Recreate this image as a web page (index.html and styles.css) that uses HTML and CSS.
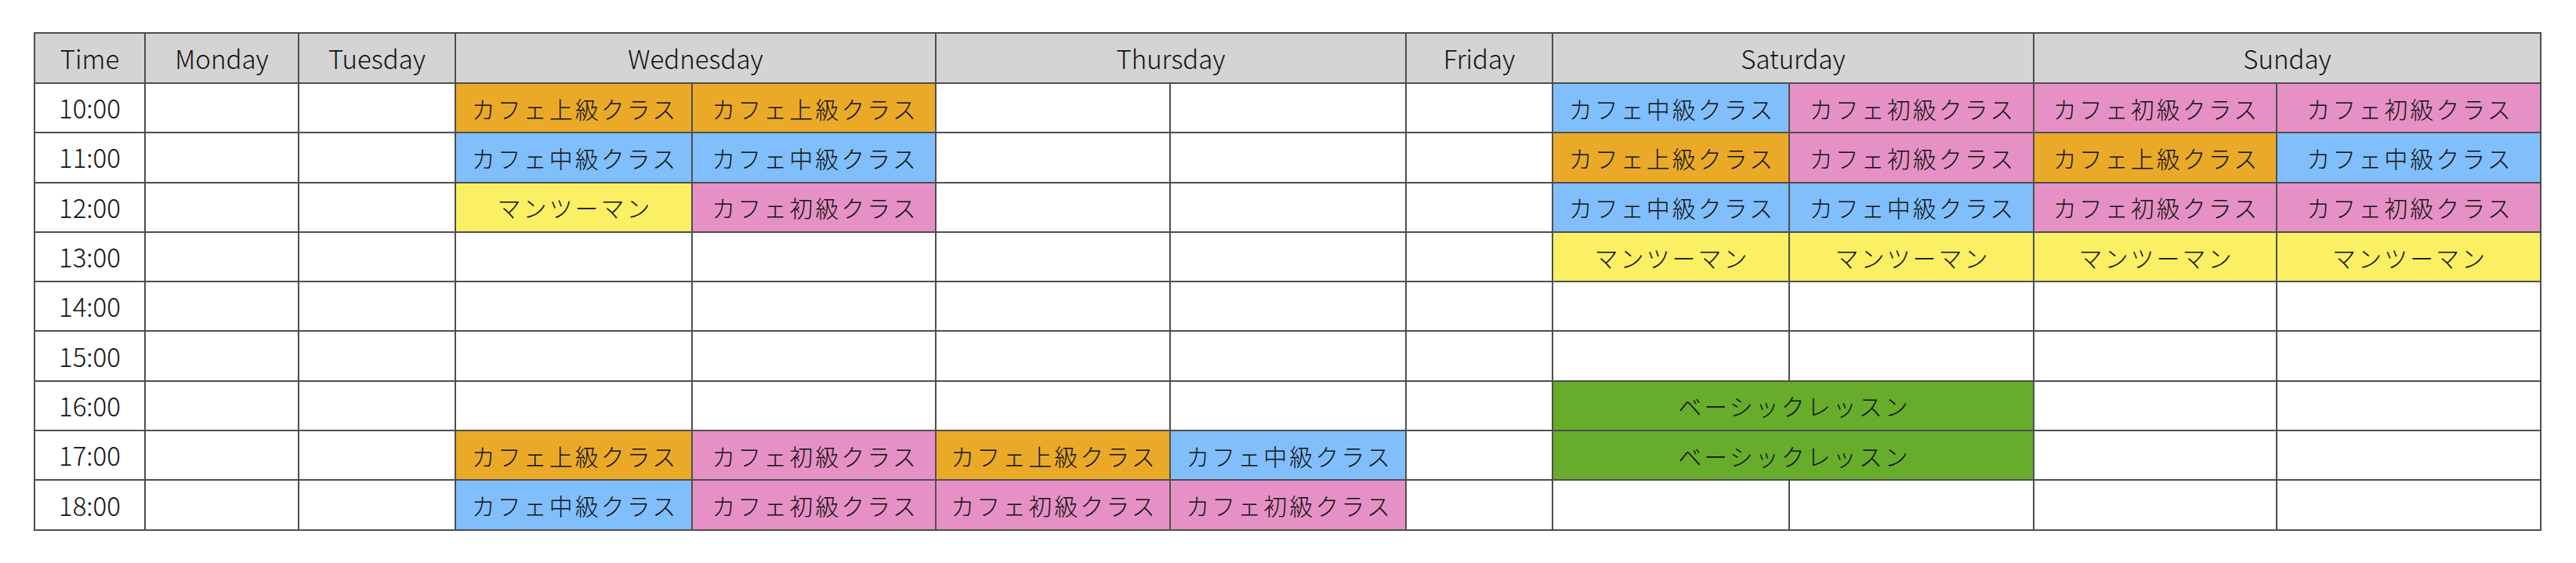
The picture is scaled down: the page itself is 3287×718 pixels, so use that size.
FILE: index.html
```html
<!DOCTYPE html>
<html lang="ja">
<head>
<meta charset="utf-8">
<title>Schedule</title>
<link rel="stylesheet" href="styles.css">
</head>
<body>
<div class="sched">
  <div class="c hd">Time</div>
  <div class="c hd">Monday</div>
  <div class="c hd">Tuesday</div>
  <div class="c hd s2">Wednesday</div>
  <div class="c hd s2">Thursday</div>
  <div class="c hd">Friday</div>
  <div class="c hd s2">Saturday</div>
  <div class="c hd s2">Sunday</div>

  <div class="c t">10:00</div>
  <div class="c"></div><div class="c"></div>
  <div class="c jp o">カフェ上級クラス</div><div class="c jp o">カフェ上級クラス</div>
  <div class="c"></div><div class="c"></div>
  <div class="c"></div>
  <div class="c jp b">カフェ中級クラス</div><div class="c jp p">カフェ初級クラス</div>
  <div class="c jp p">カフェ初級クラス</div><div class="c jp p">カフェ初級クラス</div>

  <div class="c t">11:00</div>
  <div class="c"></div><div class="c"></div>
  <div class="c jp b">カフェ中級クラス</div><div class="c jp b">カフェ中級クラス</div>
  <div class="c"></div><div class="c"></div>
  <div class="c"></div>
  <div class="c jp o">カフェ上級クラス</div><div class="c jp p">カフェ初級クラス</div>
  <div class="c jp o">カフェ上級クラス</div><div class="c jp b">カフェ中級クラス</div>

  <div class="c t">12:00</div>
  <div class="c"></div><div class="c"></div>
  <div class="c jp y">マンツーマン</div><div class="c jp p">カフェ初級クラス</div>
  <div class="c"></div><div class="c"></div>
  <div class="c"></div>
  <div class="c jp b">カフェ中級クラス</div><div class="c jp b">カフェ中級クラス</div>
  <div class="c jp p">カフェ初級クラス</div><div class="c jp p">カフェ初級クラス</div>

  <div class="c t">13:00</div>
  <div class="c"></div><div class="c"></div>
  <div class="c"></div><div class="c"></div>
  <div class="c"></div><div class="c"></div>
  <div class="c"></div>
  <div class="c jp y">マンツーマン</div><div class="c jp y">マンツーマン</div>
  <div class="c jp y">マンツーマン</div><div class="c jp y">マンツーマン</div>

  <div class="c t">14:00</div>
  <div class="c"></div><div class="c"></div>
  <div class="c"></div><div class="c"></div>
  <div class="c"></div><div class="c"></div>
  <div class="c"></div>
  <div class="c"></div><div class="c"></div>
  <div class="c"></div><div class="c"></div>

  <div class="c t">15:00</div>
  <div class="c"></div><div class="c"></div>
  <div class="c"></div><div class="c"></div>
  <div class="c"></div><div class="c"></div>
  <div class="c"></div>
  <div class="c"></div><div class="c"></div>
  <div class="c"></div><div class="c"></div>

  <div class="c t">16:00</div>
  <div class="c"></div><div class="c"></div>
  <div class="c"></div><div class="c"></div>
  <div class="c"></div><div class="c"></div>
  <div class="c"></div>
  <div class="c jp g s2">ベーシックレッスン</div>
  <div class="c"></div><div class="c"></div>

  <div class="c t">17:00</div>
  <div class="c"></div><div class="c"></div>
  <div class="c jp o">カフェ上級クラス</div><div class="c jp p">カフェ初級クラス</div>
  <div class="c jp o">カフェ上級クラス</div><div class="c jp b">カフェ中級クラス</div>
  <div class="c"></div>
  <div class="c jp g s2">ベーシックレッスン</div>
  <div class="c"></div><div class="c"></div>

  <div class="c t">18:00</div>
  <div class="c"></div><div class="c"></div>
  <div class="c jp b">カフェ中級クラス</div><div class="c jp p">カフェ初級クラス</div>
  <div class="c jp p">カフェ初級クラス</div><div class="c jp p">カフェ初級クラス</div>
  <div class="c"></div>
  <div class="c"></div><div class="c"></div>
  <div class="c"></div><div class="c"></div>
</div>
</body>
</html>
```
FILE: styles.css
```css
html, body {
  margin: 0;
  padding: 0;
  background: #ffffff;
}

body {
  font-family: "Noto Sans CJK JP", "Noto Sans", sans-serif;
  font-weight: 300;
  color: #111111;
}

.sched {
  display: grid;
  width: max-content;
  margin: 41px 0 0 43px;
  padding: 2px;
  gap: 2px;
  background: #4f4f4f;
  grid-template-columns: 139px 194px 198px 300px 309px 297px 299px 185px 300px 310px 308px 335px;
  grid-template-rows: 62px repeat(9, 61.3px);
}

.c {
  background: #ffffff;
  display: flex;
  align-items: center;
  justify-content: center;
  font-size: 33px;
  line-height: 1;
  white-space: nowrap;
}

.hd {
  background: #d4d4d4;
}

.s2 {
  grid-column: span 2;
}

.jp {
  font-size: 30px;
  letter-spacing: 3px;
  text-indent: 3px;
}

.o { background: #eaaa28; }
.b { background: #80bffc; }
.p { background: #e691c5; }
.y { background: #fbf064; }
.g { background: #67ad2b; }
```
